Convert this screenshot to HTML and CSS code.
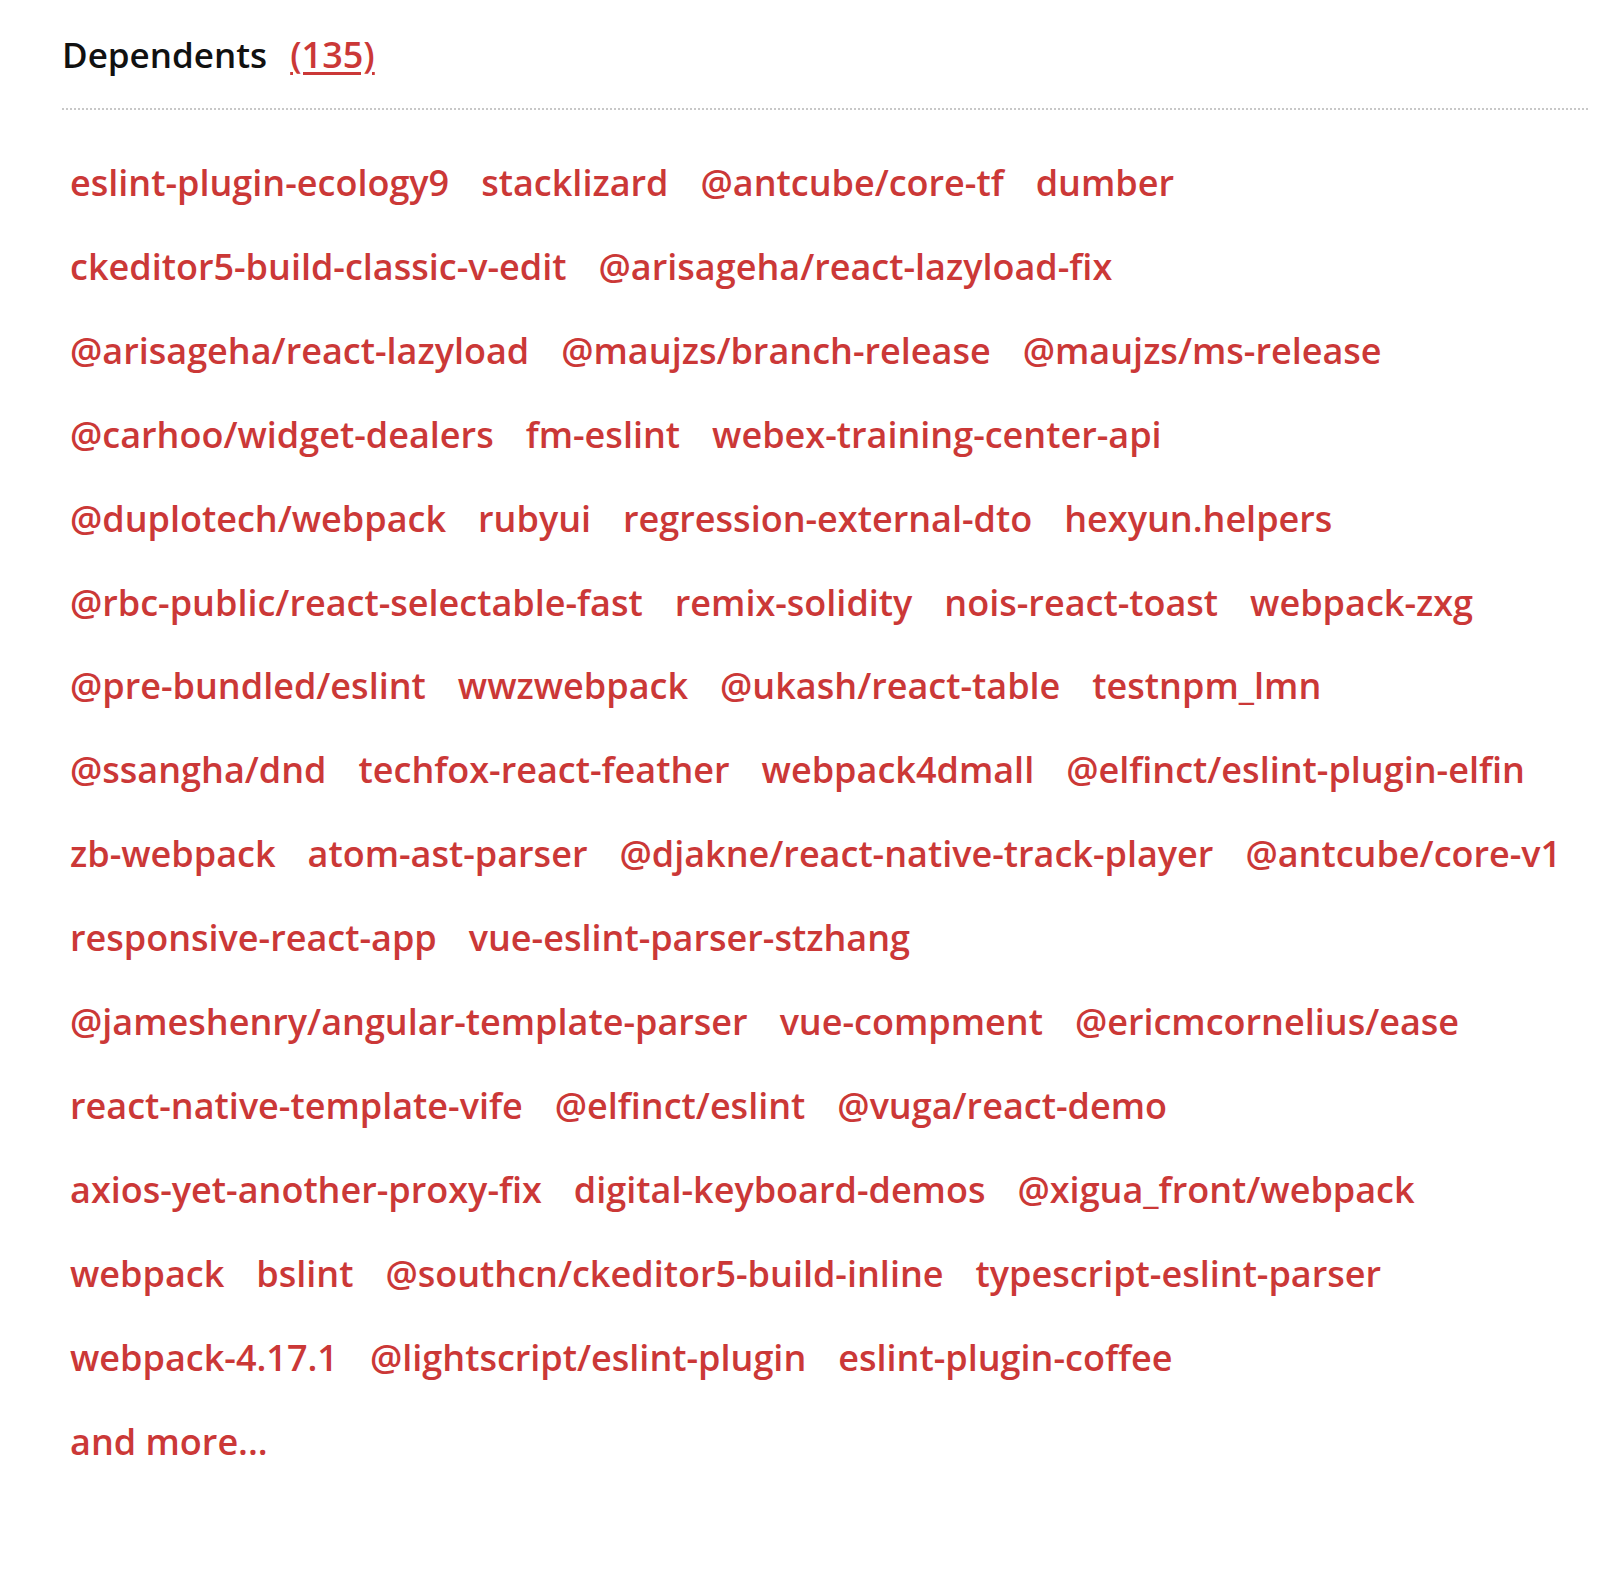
FILE: index.html
```html
<!DOCTYPE html>
<html lang="en">
<head>
<meta charset="utf-8">
<title>Dependents</title>
<link rel="stylesheet" href="styles.css">
</head>
<body>
<section class="dependents">
  <h2 class="heading">Dependents <a class="count" href="#">(135)</a></h2>
  <div class="list">
    <div class="row"><a href="#">eslint-plugin-ecology9</a><a href="#">stacklizard</a><a href="#">@antcube/core-tf</a><a href="#">dumber</a></div>
    <div class="row"><a href="#">ckeditor5-build-classic-v-edit</a><a href="#">@arisageha/react-lazyload-fix</a></div>
    <div class="row"><a href="#">@arisageha/react-lazyload</a><a href="#">@maujzs/branch-release</a><a href="#">@maujzs/ms-release</a></div>
    <div class="row"><a href="#">@carhoo/widget-dealers</a><a href="#">fm-eslint</a><a href="#">webex-training-center-api</a></div>
    <div class="row"><a href="#">@duplotech/webpack</a><a href="#">rubyui</a><a href="#">regression-external-dto</a><a href="#">hexyun.helpers</a></div>
    <div class="row"><a href="#">@rbc-public/react-selectable-fast</a><a href="#">remix-solidity</a><a href="#">nois-react-toast</a><a href="#">webpack-zxg</a></div>
    <div class="row"><a href="#">@pre-bundled/eslint</a><a href="#">wwzwebpack</a><a href="#">@ukash/react-table</a><a href="#">testnpm_lmn</a></div>
    <div class="row"><a href="#">@ssangha/dnd</a><a href="#">techfox-react-feather</a><a href="#">webpack4dmall</a><a href="#">@elfinct/eslint-plugin-elfin</a></div>
    <div class="row"><a href="#">zb-webpack</a><a href="#">atom-ast-parser</a><a href="#">@djakne/react-native-track-player</a><a href="#">@antcube/core-v1</a></div>
    <div class="row"><a href="#">responsive-react-app</a><a href="#">vue-eslint-parser-stzhang</a></div>
    <div class="row"><a href="#">@jameshenry/angular-template-parser</a><a href="#">vue-compment</a><a href="#">@ericmcornelius/ease</a></div>
    <div class="row"><a href="#">react-native-template-vife</a><a href="#">@elfinct/eslint</a><a href="#">@vuga/react-demo</a></div>
    <div class="row"><a href="#">axios-yet-another-proxy-fix</a><a href="#">digital-keyboard-demos</a><a href="#">@xigua_front/webpack</a></div>
    <div class="row"><a href="#">webpack</a><a href="#">bslint</a><a href="#">@southcn/ckeditor5-build-inline</a><a href="#">typescript-eslint-parser</a></div>
    <div class="row"><a href="#">webpack-4.17.1</a><a href="#">@lightscript/eslint-plugin</a><a href="#">eslint-plugin-coffee</a></div>
    <div class="row"><a href="#">and more...</a></div>
  </div>
</section>
</body>
</html>
```
FILE: styles.css
```css
html, body {
  margin: 0;
  padding: 0;
  background: #fff;
}

.dependents {
  padding: 0 16px 0 62px;
  font-family: "Open Sans", "Noto Sans", sans-serif;
  font-weight: 600;
  font-size: 36px;
}

.heading {
  margin: 28px 0 0;
  padding-bottom: 26px;
  font-size: 35px;
  font-weight: 600;
  line-height: 54px;
  color: #111;
  border-bottom: 2px dotted #c8c8c8;
}

.count {
  margin-left: 14px;
  color: #cb3837;
  font-size: 36px;
  text-decoration: underline;
  text-decoration-thickness: 3px;
  text-underline-offset: 4px;
}

.list {
  padding: 31px 0 0 8px;
}

.row {
  display: flex;
  gap: 32px;
  line-height: 83.9px;
  white-space: nowrap;
}

.row a {
  color: #cb3837;
  text-decoration: none;
}
```
